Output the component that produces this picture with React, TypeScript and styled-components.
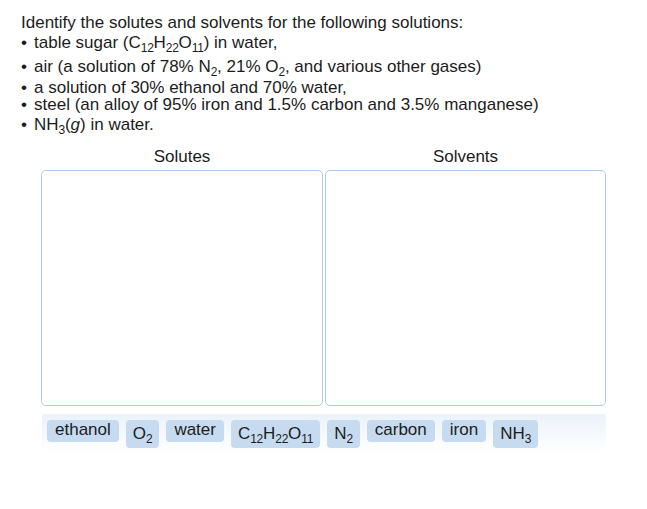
import React from 'react';
import styled, { createGlobalStyle } from 'styled-components';

const GlobalStyle = createGlobalStyle`
  body {
    margin: 0;
    background: #ffffff;
    font-family: "Liberation Sans", Arial, sans-serif;
    color: #1c1c1c;
  }
`;

type Chip = { label: React.ReactNode; tall?: boolean };

const chips: Chip[] = [
  { label: 'ethanol' },
  { label: <>O<sub>2</sub></>, tall: true },
  { label: 'water' },
  { label: <>C<sub>12</sub>H<sub>22</sub>O<sub>11</sub></>, tall: true },
  { label: <>N<sub>2</sub></>, tall: true },
  { label: 'carbon' },
  { label: 'iron' },
  { label: <>NH<sub>3</sub></>, tall: true },
];

function App() {
  return (
    <Page>
      <GlobalStyle />
      <Prompt>
        <Intro>Identify the solutes and solvents for the following solutions:</Intro>
        <List>
          <Item $sub>
            table sugar (C<sub>12</sub>H<sub>22</sub>O<sub>11</sub>) in water,
          </Item>
          <Item $sub>
            air (a solution of 78% N<sub>2</sub>, 21% O<sub>2</sub>, and various other gases)
          </Item>
          <Item>a solution of 30% ethanol and 70% water,</Item>
          <Item>steel (an alloy of 95% iron and 1.5% carbon and 3.5% manganese)</Item>
          <Item $sub>
            NH<sub>3</sub>(<i>g</i>) in water.
          </Item>
        </List>
      </Prompt>
      <Board>
        <Columns>
          <Column>
            <ColumnTitle>Solutes</ColumnTitle>
            <DropZone />
          </Column>
          <Column>
            <ColumnTitle>Solvents</ColumnTitle>
            <DropZone />
          </Column>
        </Columns>
        <Tray>
          {chips.map((c, i) => (
            <Token key={i} $tall={c.tall}>
              {c.label}
            </Token>
          ))}
        </Tray>
      </Board>
    </Page>
  );
}

export default App;

const Page = styled.div`
  width: 647px;
  height: 509px;
  font-size: 17px;

  sub {
    font-size: 12px;
    line-height: 0;
    vertical-align: -4px;
    letter-spacing: -0.3px;
  }
`;

const Prompt = styled.div`
  padding: 14px 0 0 21px;
`;

const Intro = styled.div`
  line-height: 17px;
`;

const List = styled.ul`
  list-style: none;
  margin: 0;
  padding: 0;
`;

// lines holding subscripts sit a little apart from their neighbours
const Item = styled.li<{ $sub?: boolean }>`
  line-height: 17px;
  padding: ${(p) => (p.$sub ? '3px 0 4px' : '0')};

  &::before {
    content: '•';
    display: inline-block;
    width: 13px;
  }
`;

const Board = styled.div`
  margin: 11px 0 0 41px;
  width: 566px;
`;

const Columns = styled.div`
  display: grid;
  grid-template-columns: 282px 281px;
  gap: 2px;
`;

const Column = styled.div`
  display: flex;
  flex-direction: column;
  align-items: center;
`;

const ColumnTitle = styled.div`
  line-height: 17px;
  margin-bottom: 5px;
`;

const DropZone = styled.div`
  box-sizing: border-box;
  width: 100%;
  height: 236px;
  border: 1px solid #a9cbec;
  border-radius: 5px;
  background: #ffffff;
`;

const Tray = styled.div`
  display: flex;
  align-items: flex-start;
  gap: 7px;
  margin: 8px 0 0 1px;
  width: 564px;
  box-sizing: border-box;
  padding: 6px 5px 5px;
  border-radius: 3px;
  background: linear-gradient(#ebf2fa, #ffffff);
`;

const Token = styled.span<{ $tall?: boolean }>`
  display: inline-block;
  box-sizing: border-box;
  height: ${(p) => (p.$tall ? '28px' : '22px')};
  padding: ${(p) => (p.$tall ? '5px 7px 0' : '1px 8px 0')};
  line-height: 17px;
  border-radius: 4px;
  background: #c6dbf0;
  color: #1c1c1c;
  white-space: nowrap;
`;
